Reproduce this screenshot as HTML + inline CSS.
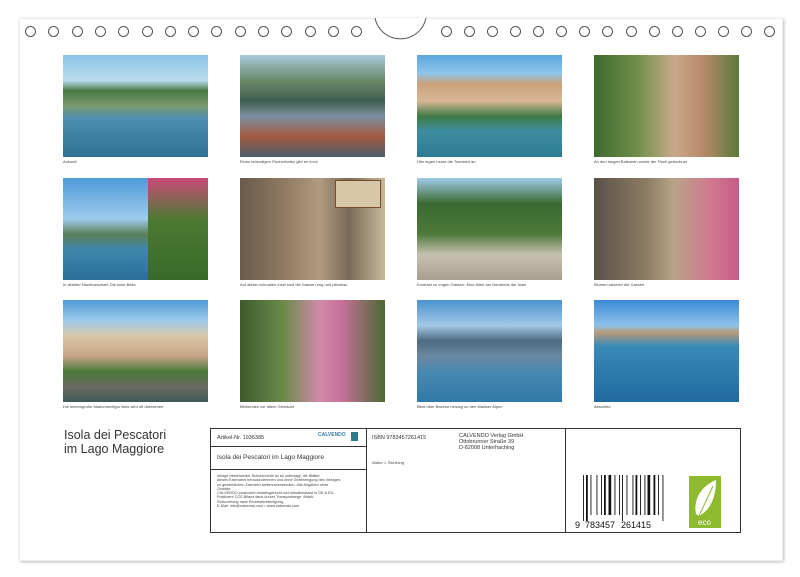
<!DOCTYPE html><html><head><meta charset="utf-8"><style>
body{margin:0;width:800px;height:577px;background:#fff;position:relative;overflow:hidden;font-family:"Liberation Sans",sans-serif}
.page{position:absolute;left:19px;top:18px;width:762px;height:541px;background:#fff;border:1px solid #eee;box-shadow:1px 1px 3px #bbb}
.h{position:absolute;top:26px;width:11px;height:11px;border:1px solid #555;border-radius:50%;box-sizing:border-box}
.p{position:absolute;width:145px;height:102px}
.c{position:absolute;font-size:4px;color:#444;white-space:nowrap}
.b{position:absolute;border:1px solid #333;box-sizing:border-box}
</style></head><body>
<div class="page"></div>
<svg style="position:absolute;left:374px;top:18px" width="54" height="28"><path d="M1 0 A26 26 0 0 0 52 0" fill="#fff" stroke="#555" stroke-width="1"/></svg>
<div id="holes"></div>
<script>
var s='';for(var i=0;i<15;i++){s+='<div class="h" style="left:'+(25+i*23.3)+'px"></div>';s+='<div class="h" style="left:'+(441+i*23.07)+'px"></div>';}document.getElementById('holes').innerHTML=s;
</script>
<!-- row1 -->
<div class="p" style="left:63px;top:55px;background:linear-gradient(180deg,#8cc4e6 0%,#b9dcef 25%,#4b7a45 35%,#7a9a70 50%,#4f8fb0 62%,#2f6f94 100%)"></div>
<div class="p" style="left:240px;top:55px;background:linear-gradient(180deg,#a9c8dc 0%,#6a8a6a 25%,#3e5e4e 45%,#7a8fa0 60%,#a35a40 80%,#4a5d6e 100%)"></div>
<div class="p" style="left:417px;top:55px;background:linear-gradient(180deg,#5aa6de 0%,#8ec5ea 18%,#c9a07a 28%,#d9b896 45%,#3f7a45 60%,#3d8fa0 75%,#2c7b94 100%)"></div>
<div class="p" style="left:594px;top:55px;background:linear-gradient(90deg,#3e6a2e 0%,#6f8f4a 30%,#c9a98a 55%,#b8896a 75%,#5a7a3a 100%)"></div>
<div class="c" style="left:63px;top:159px">Ankunft</div>
<div class="c" style="left:240px;top:159px">Einen lebendigen Fischerhafen gibt es noch</div>
<div class="c" style="left:417px;top:159px">Hier legen heute die Touristen an</div>
<div class="c" style="left:594px;top:159px">An den langen Balkonen wurde der Fisch getrocknet</div>
<!-- row2 -->
<div class="p" style="left:63px;top:178px;background:linear-gradient(180deg,#4f9bd8 0%,#9ecbec 40%,#5c7f5a 55%,#3f88ad 70%,#2a6f98 100%)"><div style="position:absolute;right:0;top:0;width:60px;height:102px;background:linear-gradient(180deg,#c94a78,#4d7a32 40%,#3a6a2a)"></div></div>
<div class="p" style="left:240px;top:178px;background:linear-gradient(90deg,#6a5a4a 0%,#8f7a62 30%,#b09a80 55%,#7a6a58 75%,#c8b89a 100%)"><div style="position:absolute;right:4px;top:2px;width:44px;height:26px;background:#d8c6a8;border:1px solid #7a4a2a"></div></div>
<div class="p" style="left:417px;top:178px;background:linear-gradient(180deg,#9fcbe8 0%,#3a6a30 25%,#4e7a3a 55%,#c8c0b0 75%,#a89e90 100%)"></div>
<div class="p" style="left:594px;top:178px;background:linear-gradient(90deg,#5a5248 0%,#8a7a62 35%,#b8a488 55%,#d07a90 80%,#c85a88 100%)"></div>
<div class="c" style="left:63px;top:282px">In direkter Nachbarschaft: Die Isola Bella</div>
<div class="c" style="left:240px;top:282px">Auf dieser schmalen Insel sind die Gassen eng und pittoresk</div>
<div class="c" style="left:417px;top:282px">Kontrast zu engen Gassen: Eine Allee am Nordende der Insel</div>
<div class="c" style="left:594px;top:282px">Blumen säumen die Gassen</div>
<!-- row3 -->
<div class="p" style="left:63px;top:300px;background:linear-gradient(180deg,#4f9bd8 0%,#9ccbec 20%,#d8c8a8 35%,#c9a488 55%,#4a7a3a 70%,#6a6a60 85%,#3e5a5a 100%)"></div>
<div class="p" style="left:240px;top:300px;background:linear-gradient(90deg,#3e5a2e 0%,#6a8a4a 30%,#d08aa8 55%,#c8709a 70%,#4a6a32 100%)"></div>
<div class="p" style="left:417px;top:300px;background:linear-gradient(180deg,#4a92d0 0%,#a2c8e6 25%,#4e6a80 40%,#6a88a0 55%,#4a8ab0 70%,#2f7aa8 100%)"></div>
<div class="p" style="left:594px;top:300px;background:linear-gradient(180deg,#3a8ad6 0%,#8ec2ea 25%,#b89a7a 32%,#3a8ab8 45%,#1f6aa0 100%)"></div>
<div class="c" style="left:63px;top:404px">Die lebensgroße Madonnenfigur links wird oft übersehen</div>
<div class="c" style="left:240px;top:404px">Blühendes vor altem Gemäuer</div>
<div class="c" style="left:417px;top:404px">Blick über Baveno hinweg zu den Walliser Alpen</div>
<div class="c" style="left:594px;top:404px">Abschied</div>
<!-- title -->
<div style="position:absolute;left:64px;top:428px;font-size:12.5px;line-height:14px;color:#333">Isola dei Pescatori<br>im Lago Maggiore</div>
<!-- info box -->
<div class="b" style="left:210px;top:428px;width:531px;height:105px"></div>
<div style="position:absolute;left:366px;top:428px;width:1px;height:105px;background:#333"></div>
<div style="position:absolute;left:565px;top:428px;width:1px;height:105px;background:#333"></div>
<div style="position:absolute;left:210px;top:446px;width:156px;height:1px;background:#333"></div>
<div style="position:absolute;left:210px;top:469px;width:156px;height:1px;background:#333"></div>
<div style="position:absolute;left:217px;top:435px;font-size:5.5px;color:#333">Artikel-Nr. 1936385</div>
<div style="position:absolute;left:318px;top:432px;font-size:5px;color:#3a7aa8;font-weight:bold">CALVENDO</div>
<div style="position:absolute;left:351px;top:432px;width:7px;height:9px;background:#2f7a8a"></div>
<div style="position:absolute;left:217px;top:454px;font-size:6.5px;color:#333">Isola dei Pescatori im Lago Maggiore</div>
<div style="position:absolute;left:217px;top:474px;font-size:3.8px;line-height:4.3px;color:#444">Infolge bestehender Schutzrechte ist es untersagt, die Blätter<br>dieses Kalenders herauszutrennen und ohne Genehmigung des Verlages<br>zu gewerblichen Zwecken weiterzuverwenden. Alle Angaben ohne<br>Gewähr.<br>CALVENDO produziert bedarfsgerecht und klimabewusst in DE &amp; EU.<br>Positivere CO2-Bilanz dank kurzer Transportwege. Abfall-<br>Reduzierung dank Einzelstückfertigung.<br>E-Mail: info@calvendo.com • www.calvendo.com</div>
<div style="position:absolute;left:372px;top:435px;font-size:5.5px;color:#333">ISBN 9783457261415</div>
<div style="position:absolute;left:372px;top:461px;font-size:3.8px;color:#444">Walter J. Richtberg</div>
<div style="position:absolute;left:459px;top:433px;font-size:5.5px;line-height:6px;color:#333">CALVENDO Verlag GmbH<br>Ottobrunner Straße 39<br>D-82008 Unterhaching</div>
<svg style="position:absolute;left:575px;top:475px" width="90" height="55">
<g fill="#111" id="bars"></g>
<text x="0" y="53" font-size="9" font-family="Liberation Sans" fill="#111">9</text>
<text x="10" y="53" font-size="9" font-family="Liberation Sans" fill="#111">783457</text>
<text x="46" y="53" font-size="9" font-family="Liberation Sans" fill="#111">261415</text>
</svg>
<script>
var w=[1,1,2,1,1,3,1,2,1,1,2,1,3,1,1,2,1,1,1,2,1,3,1,1,2,1,1,2,1,1,3,1,2,1,1,2,1,1];var x=8,g='';for(var i=0;i<w.length;i++){if(i%2==0)g+='<rect x="'+x+'" y="0" width="'+w[i]*0.9+'" height="'+(i<3||i>w.length-4||i==18||i==19?46:40)+'"/>';x+=w[i]*1.5;}document.getElementById('bars').innerHTML=g;
</script>
<div style="position:absolute;left:689px;top:476px;width:32px;height:52px;background:#8dba2e"></div>
<svg style="position:absolute;left:689px;top:476px" width="32" height="52"><path d="M7 38 C4 24 12 10 27 4 C27 20 22 34 10 40 Z" fill="#fff"/><path d="M10 40 L24 10" stroke="#8dba2e" stroke-width="1"/><text x="9" y="49" font-size="8" font-family="Liberation Sans" fill="#fff">eco</text></svg>
</body></html>
